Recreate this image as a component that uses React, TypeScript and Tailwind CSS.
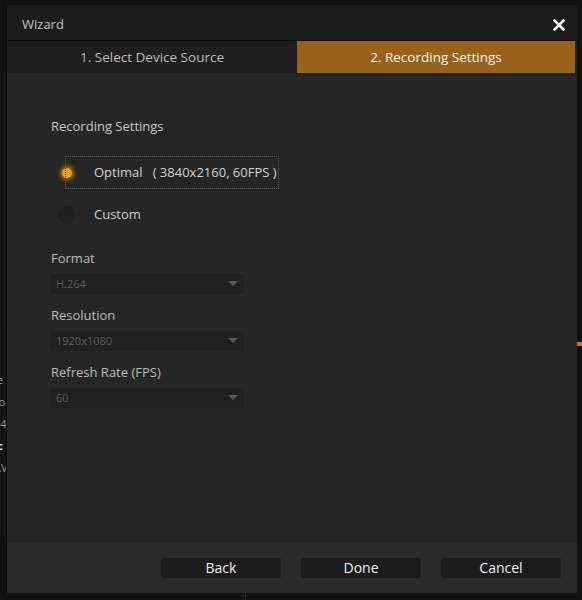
import React from "react";

const font = { fontFamily: '"Open Sans", "Noto Sans", sans-serif' };

function Radio({ checked }: { checked: boolean }) {
  return checked ? (
    <span className="flex h-[16px] w-[16px] shrink-0 items-center justify-center rounded-full bg-[#3a2a10]">
      <span className="h-[10px] w-[10px] rounded-full bg-[#f0a020] shadow-[0_0_4px_2px_rgba(230,150,30,0.6)]" />
    </span>
  ) : (
    <span className="block h-[18px] w-[18px] shrink-0 rounded-full bg-[#1f1f1f]" />
  );
}

function Select({ value }: { value: string }) {
  return (
    <div className="mt-[8px] flex h-[20px] w-[193px] items-center justify-between bg-[#202020] pl-[5px] pr-[6px]">
      <span className="text-[11px] text-[#5c5c5c]">{value}</span>
      <svg width="10" height="6" viewBox="0 0 10 6">
        <path d="M0 0 L10 0 L5 5 Z" fill="#5a5a5a" />
      </svg>
    </div>
  );
}

function Field({ label, value }: { label: string; value: string }) {
  return (
    <div className="mt-[13px] first:mt-0">
      <div className="text-[13px] leading-[16px] text-[#bdbdbd]">{label}</div>
      <Select value={value} />
    </div>
  );
}

export default function App() {
  return (
    <div className="relative h-[600px] w-[582px] overflow-hidden bg-[#121212]" style={font}>
      {/* bits of the app behind the dialog */}
      <div className="absolute left-0 top-[326px] h-[200px] w-[6px] overflow-hidden bg-[#141414]">
        <div className="absolute left-[-6px] top-[46px] flex flex-col gap-[6px] text-[11px] leading-[16px] text-[#9a9a9a]">
          <span>ie</span>
          <span>ro</span>
          <span>e4</span>
          <span className="font-bold text-[#ddd]">ic</span>
          <span>AV</span>
        </div>
      </div>
      <div className="absolute right-0 top-[342px] h-[4px] w-[5px] bg-[#b07a28]" />
      <div className="absolute bottom-0 left-[245px] h-[7px] w-px bg-[#2a2a2a]" />

      <div className="absolute left-[6px] top-[5px] flex h-[588px] w-[571px] flex-col border-l border-[#0b0b0b] bg-[#262626]">
        <div className="flex h-[36px] shrink-0 items-center justify-between border-b border-[#0c0c0c] bg-[#1c1c1c] pl-[15px] pr-[12px] pt-[4px]">
          <span className="text-[13px] text-[#c4c4c4]">Wizard</span>
          <svg width="12" height="12" viewBox="0 0 12 12">
            <path d="M1.5 1.5 L10.5 10.5 M10.5 1.5 L1.5 10.5" stroke="#f2f2f2" strokeWidth="2.6" strokeLinecap="square" />
          </svg>
        </div>
        <div className="flex h-[32px] shrink-0 pr-[2px]">
          <div className="flex flex-1 items-center justify-center bg-[#1e1e1e] text-[13.5px] text-[#bdbdbd]">
            1. Select Device Source
          </div>
          <div className="flex w-[278px] items-center justify-center bg-[#99621a] text-[13.5px] text-[#f4f4f4]">
            2. Recording Settings
          </div>
        </div>

        <div className="flex-1 pl-[44px] pt-[44px]">
          <div className="text-[13px] leading-[18px] text-[#c6c6c6]">Recording Settings</div>
          <div className="mt-[21px] flex flex-col gap-[9px]">
            <div className="flex h-[33px] items-center">
              <span className="ml-[8px] flex">
                <Radio checked />
              </span>
              <span className="ml-[-10px] flex h-[33px] w-[214px] items-center border border-dotted border-[#555] pl-[28px] text-[13px] text-[#d2d2d2]">
                Optimal&nbsp;&nbsp;&nbsp;( 3840x2160, 60FPS )
              </span>
            </div>
            <div className="flex h-[33px] items-center">
              <span className="ml-[7px] flex">
                <Radio checked={false} />
              </span>
              <span className="ml-[18px] text-[13px] text-[#cfcfcf]">Custom</span>
            </div>
          </div>
          <div className="mt-[19px] flex flex-col">
            <Field label="Format" value="H.264" />
            <Field label="Resolution" value="1920x1080" />
            <Field label="Refresh Rate (FPS)" value="60" />
          </div>
        </div>

        <div className="flex h-[50px] shrink-0 items-center justify-end gap-[20px] bg-[#2b2b2b] pr-[16px]">
          {["Back", "Done", "Cancel"].map((b) => (
            <button
              key={b}
              className="h-[20px] w-[120px] rounded-[2px] bg-[#1c1c1c] text-[14px] leading-[20px] text-[#f0f0f0]"
            >
              {b}
            </button>
          ))}
        </div>
      </div>
    </div>
  );
}
